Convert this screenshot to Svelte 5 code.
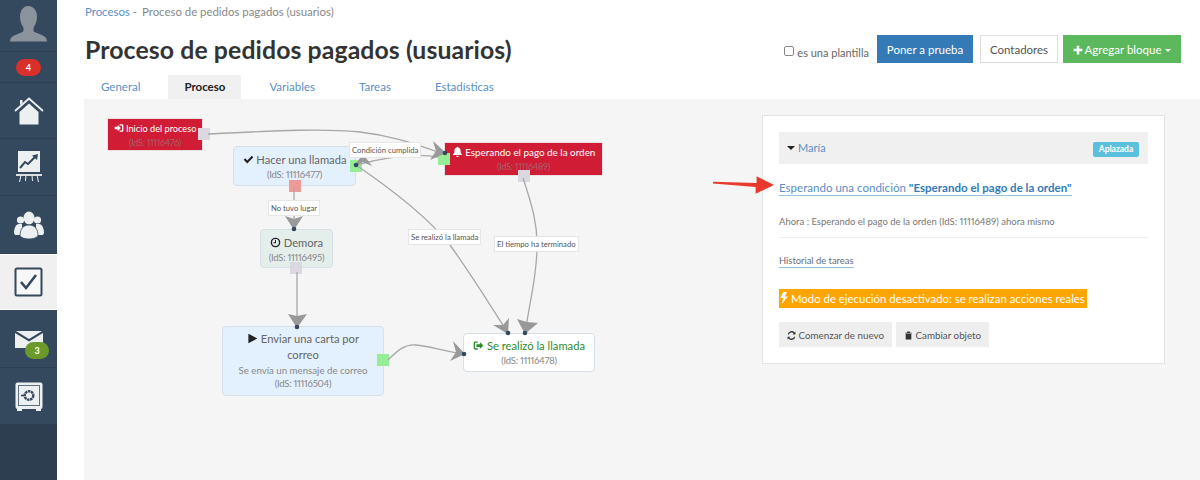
<script>
	const ox = 84
	const oy = 99

	const nodes = [
		{ id: 'start', x: 107, y: 118, w: 96, h: 33, kind: 'red small', icon: 'signin', title: 'Inicio del proceso', ids: '11116476' },
		{ id: 'call', x: 233, y: 146, w: 123, h: 40, kind: 'blue', icon: 'check', title: 'Hacer una llamada', ids: '11116477' },
		{ id: 'delay', x: 260, y: 229, w: 73, h: 39, kind: 'teal', icon: 'clock', title: 'Demora', ids: '11116495' },
		{ id: 'mail', x: 222, y: 326, w: 162, h: 70, kind: 'blue wide', icon: 'play', title: 'Enviar una carta por correo', sub: 'Se envía un mensaje de correo', ids: '11116504' },
		{ id: 'wait', x: 444, y: 142, w: 159, h: 34, kind: 'red', icon: 'bell', title: 'Esperando el pago de la orden', ids: '11116489' },
		{ id: 'done', x: 463, y: 333, w: 132, h: 39, kind: 'white', icon: 'signout', title: 'Se realizó la llamada', ids: '11116478' }
	]

	const ports = [
		{ x: 198, y: 128, c: 'grey' },
		{ x: 350, y: 160, c: 'green' },
		{ x: 289, y: 180, c: 'pink' },
		{ x: 290, y: 262, c: 'grey' },
		{ x: 377, y: 354, c: 'green' },
		{ x: 438, y: 153, c: 'green' },
		{ x: 518, y: 170, c: 'grey' }
	]

	const labels = [
		{ x: 349, y: 142, text: 'Condición cumplida' },
		{ x: 268, y: 200, text: 'No tuvo lugar' },
		{ x: 408, y: 229, text: 'Se realizó la llamada' },
		{ x: 494, y: 236, text: 'El tiempo ha terminado' }
	]

	const edges = [
		'M208,134 C270,131 320,128 360,132 C395,136 420,146 438,152',
		'M356,165 C375,160 410,152 438,157',
		'M294,188 L294,224',
		'M297,272 L297,322',
		'M356,165 C400,195 430,220 450,245 C475,280 490,305 506,330',
		'M523,178 C532,205 538,225 537,250 C536,280 530,300 526,328',
		'M388,360 C398,350 405,344 416,345 C428,346 440,350 458,353'
	]

	const arrows = [
		'446,153 433,141 436,151 430,160',
		'354,166 363,154 372,166 363,162',
		'294,230 285,216 294,219 303,216',
		'297,328 288,314 297,316 307,314',
		'508,334 493,325 503,325 509,318',
		'525,334 517,319 527,322 538,323',
		'465,354 453,341 456,352 450,361'
	]

	const dots = [[445, 153], [356, 165], [294, 229], [297, 327], [508, 333], [525, 333], [464, 354]]

	const nav = [
		{ id: 'home', h: 56 },
		{ id: 'chart', h: 57 },
		{ id: 'people', h: 58 },
		{ id: 'tasks', h: 56, active: true },
		{ id: 'mail', h: 58, badge: 3 },
		{ id: 'safe', h: 57 }
	]

	const tabs = ['General', 'Proceso', 'Variables', 'Tareas', 'Estadísticas']
</script>

{#snippet icon(name)}
	<svg class="ico" viewBox="0 0 16 16" aria-hidden="true">
		{#if name === 'signin'}
			<path d="M1 6h5V3l5 5-5 5v-3H1z" /><path d="M9 2h4a2 2 0 0 1 2 2v8a2 2 0 0 1-2 2H9v-2h4V4H9z" />
		{:else if name === 'signout'}
			<path d="M7 2H3a2 2 0 0 0-2 2v8a2 2 0 0 0 2 2h4v-2H3V4h4z" /><path d="M5 6h5V3l5 5-5 5v-3H5z" />
		{:else if name === 'check'}
			<path d="M1 8.500 3.200 6.300 6.200 9.300 12.800 2.700 15 4.900 6.200 13.700z" />
		{:else if name === 'clock'}
			<path fill-rule="evenodd" d="M8 1a7 7 0 1 1 0 14A7 7 0 0 1 8 1zm0 2a5 5 0 1 0 0 10A5 5 0 0 0 8 3z" /><path d="M7.300 4.500h1.400V9H5V7.600h2.300z" />
		{:else if name === 'play'}
			<path d="M2 1 15 8 2 15z" />
		{:else if name === 'bell'}
			<path d="M8 1a1.200 1.200 0 0 1 1.200 1.300C11.500 2.900 12.500 5 12.500 7.500c0 2.500 1 3.700 2.200 4.700v.8H1.300v-.8c1.200-1 2.200-2.200 2.200-4.700S4.500 2.900 6.800 2.300A1.200 1.200 0 0 1 8 1z" /><path d="M6 14h4a2 2 0 0 1-4 0z" />
		{:else if name === 'refresh'}
			<path d="M13.500 2.500 15 1v5h-5l1.800-1.800A4.800 4.800 0 0 0 3.500 6H1.300a7 7 0 0 1 12.200-3.500z" /><path d="M2.500 13.500 1 15v-5h5l-1.800 1.800A4.800 4.800 0 0 0 12.500 10h2.200a7 7 0 0 1-12.200 3.500z" />
		{:else if name === 'trash'}
			<path d="M6 1h4l1 2h3v1.500H2V3h3zM3 5.500h10V15H3z" />
		{:else if name === 'bolt'}
			<path d="M7 0h5L9 6h4L5 16l2-8H3z" />
		{:else if name === 'plus'}
			<path d="M6 1h4v5h5v4h-5v5H6v-5H1V6h5z" />
		{/if}
	</svg>
{/snippet}

<div class="page">
	<aside class="sidebar">
		<div class="avatar">
			<svg viewBox="0 0 57 52" width="57" height="52">
				<path fill="#8b939c" d="M28 6c6 0 9 5 9 11 0 4-1.500 8-3.500 10.500v3.500c2 2.500 12 4 13 8 .5 1.500 .5 2.500 .5 2.500H10s0-1 .5-2.500c1-4 11-5.500 13-8v-3.500C21.500 25 20 21 20 17c0-6 3-11 8-11z" />
			</svg>
		</div>
		<div class="notify"><span class="pill red">4</span></div>
		{#each nav as item}
			<div class="nav-item" class:active={item.active} style:height="{item.h}px">
				{#if item.id === 'home'}
					<svg viewBox="0 0 30 28" width="30" height="28">
						<path d="M1 14 15 1.500 29 14" fill="none" stroke="#ecf0f1" stroke-width="1.800" />
						<path d="M6 8V3h2.500v3z" fill="#ecf0f1" />
						<path d="M5.500 15 15 6.500 24.500 15v12.500h-19z" fill="#ecf0f1" />
					</svg>
				{:else if item.id === 'chart'}
					<svg viewBox="0 0 26 32" width="26" height="32">
						<rect x="2" y="0" width="22" height="21" fill="#ecf0f1" />
						<path d="M4 17l5-6 3 2 7-7" fill="none" stroke="#34495e" stroke-width="2" />
						<path d="M16 4.500 22 3l-1 6z" fill="#34495e" />
						<path d="M0 24h26" stroke="#ecf0f1" stroke-width="1.800" />
						<path d="M5 24l-1.500 7M21 24l1.500 7M10 24l-.5 6M16 24l.5 6" stroke="#ecf0f1" stroke-width="1" />
					</svg>
				{:else if item.id === 'people'}
					<svg viewBox="0 0 30 28" width="30" height="28" fill="#ecf0f1">
						<circle cx="6.500" cy="9" r="3.600" /><circle cx="23.500" cy="9" r="3.600" />
						<path d="M0 22c0-5 2-9 5-9h3v11H1z" /><path d="M30 22c0-5-2-9-5-9h-3v11h7z" />
						<ellipse cx="15" cy="7" rx="5.500" ry="6.500" />
						<path d="M6 25c0-7 3-11 9-11s9 4 9 11c-2 2-5 3-9 3s-7-1-9-3z" stroke="#34495e" stroke-width=".8" />
					</svg>
				{:else if item.id === 'tasks'}
					<svg viewBox="0 0 29 30" width="29" height="30">
						<rect x="1.500" y="1.500" width="26" height="27" rx="1.500" fill="#f7f7f7" stroke="#34495e" stroke-width="2" />
						<path d="M7 15l5 6 10-13" fill="none" stroke="#34495e" stroke-width="2.600" />
					</svg>
				{:else if item.id === 'mail'}
					<svg class="envelope" viewBox="0 0 28 17" width="28" height="17" fill="#ecf0f1">
						<path d="M1 0h26L14 8z" /><path d="M0 2v15h28V2L14 10.500z" />
					</svg>
				{:else if item.id === 'safe'}
					<svg viewBox="0 0 28 29" width="28" height="29">
						<rect x="0.500" y="0.500" width="27" height="26.500" rx="2" fill="#ecf0f1" />
						<rect x="3.500" y="3.500" width="21" height="20" fill="#ecf0f1" stroke="#5c6f82" stroke-width="1" />
						<circle cx="14" cy="13.500" r="4.300" fill="none" stroke="#34495e" stroke-width="2.400" stroke-dasharray="2.500 .6" />
						<path d="M6 13.500h3" stroke="#34495e" stroke-width="1.600" />
						<path d="M2 27h5v2H2zM21 27h5v2h-5z" fill="#ecf0f1" />
					</svg>
				{/if}
				{#if item.badge}<span class="pill green">{item.badge}</span>{/if}
			</div>
		{/each}
		<div class="sidebar-rest"></div>
	</aside>

	<main class="main">
		<nav class="crumbs"><a href="#top">Procesos</a><span class="sep">-</span><span>Proceso de pedidos pagados (usuarios)</span></nav>

		<header class="head">
			<h1>Proceso de pedidos pagados (usuarios)</h1>
			<div class="actions">
				<label class="tpl"><span class="box"></span>es una plantilla</label>
				<button class="btn primary">Poner a prueba</button>
				<button class="btn plain">Contadores</button>
				<button class="btn success">{@render icon('plus')}Agregar bloque <i class="caret"></i></button>
			</div>
		</header>

		<ul class="tabs">
			{#each tabs as tab}
				<li class:on={tab === 'Proceso'}>{tab}</li>
			{/each}
		</ul>

		<section class="canvas">
			{#each nodes as n}
				<div class="node {n.kind}" style:left="{n.x - ox}px" style:top="{n.y - oy}px" style:width="{n.w}px" style:height="{n.h}px">
					<div class="node-title">{@render icon(n.icon)} {n.title}</div>
					{#if n.sub}<div class="node-sub">{n.sub}</div>{/if}
					<div class="node-ids">(IdS: {n.ids})</div>
				</div>
			{/each}

			{#each ports as p}
				<span class="port {p.c}" style:left="{p.x - ox}px" style:top="{p.y - oy}px"></span>
			{/each}

			<svg class="wires" viewBox="84 99 1116 381" width="1116" height="381">
				{#each edges as d}
					<path {d} fill="none" stroke="#a8a8a8" stroke-width="1.300" />
				{/each}
				{#each arrows as points}
					<polygon {points} fill="#999" />
				{/each}
				{#each dots as [cx, cy]}
					<circle {cx} {cy} r="2.300" fill="#34495e" />
				{/each}
			</svg>

			{#each labels as l}
				<span class="edge-label" style:left="{l.x - ox}px" style:top="{l.y - oy}px">{l.text}</span>
			{/each}

			<div class="panel">
				<div class="subject">
					<span class="who"><i class="caret dark"></i><a href="#top">María</a></span>
					<span class="status">Aplazada</span>
				</div>
				<a class="wait-link" href="#top">Esperando una condición <b>"Esperando el pago de la orden"</b></a>
				<p class="now">Ahora : Esperando el pago de la orden (IdS: 11116489) ahora mismo</p>
				<a class="history" href="#top">Historial de tareas</a>
				<div class="mode-row"><span class="mode">{@render icon('bolt')} Modo de ejecución desactivado: se realizan acciones reales</span></div>
				<div class="panel-actions">
					<button class="btn-soft">{@render icon('refresh')} Comenzar de nuevo</button>
					<button class="btn-soft">{@render icon('trash')} Cambiar objeto</button>
				</div>
			</div>

			<svg class="callout" viewBox="0 0 64 20" width="62" height="20">
				<path d="M0 5.500 45 7V0l18 9-19 9v-7L0 7.500z" fill="#e8392c" />
			</svg>
		</section>
	</main>
</div>

<style>
	:global(body) {
		margin: 0;
		overflow: hidden;
		background: #fff;
	}

	.page {
		display: flex;
		width: 1200px;
		height: 480px;
		overflow: hidden;
		font-family: Lato, "Noto Sans", sans-serif;
		font-variant-numeric: proportional-nums;
		color: #555;
	}

	a {
		color: #5b8fc7;
		text-decoration: none;
	}

	.sidebar {
		width: 57px;
		flex: none;
		display: flex;
		flex-direction: column;
		background: #34495e;
	}

	.avatar {
		height: 52px;
		border-bottom: 1px solid #2d4054;
		box-sizing: border-box;
	}

	.avatar svg {
		display: block;
	}

	.notify {
		height: 31px;
		display: flex;
		align-items: center;
		justify-content: center;
		border-bottom: 1px solid #2d4054;
		box-sizing: border-box;
	}

	.pill {
		display: flex;
		align-items: center;
		justify-content: center;
		width: 25px;
		height: 17px;
		border-radius: 9px;
		color: #fff;
		font-size: 9px;
		font-weight: 700;
	}

	.pill.red {
		background: #d9302b;
	}

	.pill.green {
		position: absolute;
		left: 25px;
		top: 32px;
		width: 24px;
		background: #6b9a2a;
	}

	.nav-item {
		position: relative;
		display: flex;
		align-items: center;
		justify-content: center;
		border-bottom: 1px solid #2d4054;
		box-sizing: border-box;
	}

	.nav-item.active {
		background: #f0f0f0;
		border-top: 1px solid #fff;
		border-bottom: 1px solid #fff;
	}

	.envelope {
		margin-top: 2px;
	}

	.sidebar-rest {
		flex: 1;
		background: #2c3e50;
	}

	.main {
		flex: 1;
		min-width: 0;
		display: flex;
		flex-direction: column;
	}

	.crumbs {
		height: 23px;
		padding-left: 28px;
		font-size: 11.400px;
		line-height: 23px;
		color: #888;
		white-space: nowrap;
	}

	.sep {
		margin: 0 5px 0 3px;
	}

	.head {
		height: 52px;
		display: flex;
		align-items: center;
		justify-content: space-between;
		padding: 0 19px 0 28px;
	}

	h1 {
		margin: 0;
		font-size: 24.800px;
		letter-spacing: 0.1px;
		font-weight: 700;
		color: #333;
		white-space: nowrap;
	}

	.actions {
		display: flex;
		align-items: center;
	}

	.tpl {
		display: flex;
		align-items: center;
		gap: 3px;
		margin-right: 8px;
		padding-top: 6px;
		font-size: 11px;
		color: #666;
	}

	.box {
		width: 8px;
		height: 8px;
		margin-top: -3px;
		border: 1px solid #888;
		border-radius: 2px;
		background: #fff;
	}

	.btn {
		height: 28px;
		padding: 0;
		border: 1px solid transparent;
		box-sizing: border-box;
		font: 11.500px Lato, "Noto Sans", sans-serif;
		white-space: nowrap;
	}

	.primary {
		width: 96px;
		margin-right: 7px;
		background: #337ab7;
		color: #fff;
	}

	.plain {
		width: 78px;
		margin-right: 5px;
		background: #fff;
		border-color: #ddd;
		color: #555;
	}

	.success {
		width: 118px;
		background: #5cb85c;
		color: #fff;
	}

	.success .ico {
		width: 10px;
		height: 10px;
		margin-right: 2px;
	}

	.caret {
		display: inline-block;
		width: 0;
		height: 0;
		margin-left: 1px;
		vertical-align: 2px;
		border: 3.500px solid transparent;
		border-top-color: #fff;
		border-bottom: 0;
	}

	.caret.dark {
		border-top-color: #222;
		border-width: 4px;
		border-bottom: 0;
		margin: 0 3px 0 0;
	}

	.ico {
		width: 1em;
		height: 1em;
		vertical-align: -0.12em;
		fill: currentColor;
	}

	.tabs {
		display: flex;
		height: 24px;
		margin: 0 0 0 28px;
		padding: 0;
		list-style: none;
		font-size: 11.500px;
		line-height: 24px;
		color: #5b8fc7;
	}

	.tabs li {
		padding: 0 16px;
		margin-right: 12px;
	}

	.tabs li.on {
		background: #f0f0f0;
		color: #222;
		font-weight: 700;
	}

	.canvas {
		position: relative;
		flex: 1;
		margin-left: 27px;
		padding: 16px 35px 0 0;
		display: flex;
		justify-content: flex-end;
		align-items: flex-start;
		background: #f5f5f5;
	}

	.wires {
		position: absolute;
		left: 0;
		top: 0;
	}

	.node {
		position: absolute;
		box-sizing: border-box;
		padding-top: 5px;
		border: 1px solid #d8dfe6;
		border-radius: 4px;
		text-align: center;
		color: #666;
	}

	.node-title {
		font-size: 11.200px;
		line-height: 16px;
	}

	.node-title .ico {
		width: 11px;
		height: 11px;
		color: #222;
	}

	.node-sub {
		font-size: 9.700px;
		line-height: 14px;
		color: #888;
		white-space: nowrap;
	}

	.node-ids {
		font-size: 9.500px;
		letter-spacing: -0.25px;
		line-height: 14px;
		color: #888;
	}

	.node.blue {
		background: #e3f0fd;
	}

	.node.blue.wide {
		padding-top: 4px;
	}

	.node.blue.wide .node-title {
		padding: 0 20px;
	}

	.node.teal {
		background: #e4efec;
	}

	.node.white {
		padding-top: 4px;
		background: #fff;
	}

	.node.white .node-title,
	.node.white .node-title .ico {
		color: #2e8b2e;
	}

	.node.red {
		padding-top: 2px;
		background: #d01c34;
		border-color: #e8dfe2;
		border-radius: 0;
		color: #fff;
	}

	.node.red .node-title {
		font-size: 9.900px;
		line-height: 15px;
		color: #fff;
		white-space: nowrap;
	}

	.node.red .node-title .ico {
		color: #fff;
	}

	.node.red .node-ids {
		color: #a7606c;
		line-height: 13px;
		font-size: 9px;
	}

	.node.red.small .node-title {
		font-size: 9.200px;
	}

	.node.red.small .node-title .ico {
		width: 10px;
		height: 10px;
	}

	.port {
		position: absolute;
		width: 12px;
		height: 12px;
	}

	.port.grey {
		background: #dcd8e2;
	}

	.port.green {
		background: #95ee95;
	}

	.port.pink {
		background: #ee9a9a;
	}

	.edge-label {
		position: absolute;
		padding: 0 2px;
		border: 1px solid #e6e6e6;
		background: #fff;
		font-size: 7.700px;
		line-height: 14px;
		color: #555;
		white-space: nowrap;
	}

	.panel {
		position: relative;
		box-sizing: border-box;
		width: 403px;
		height: 249px;
		padding: 16px;
		background: #fff;
		border: 1px solid #e3e3e3;
	}

	.subject {
		display: flex;
		justify-content: space-between;
		align-items: center;
		height: 32px;
		padding: 0 9px 0 8px;
		background: #f0f0f0;
		font-size: 11px;
	}

	.who {
		margin-top: -2px;
	}

	.status {
		width: 46px;
		height: 15px;
		margin-top: 2px;
		border-radius: 2px;
		background: #5bc0de;
		color: #fff;
		font-size: 8.500px;
		font-weight: 700;
		line-height: 15px;
		text-align: center;
	}

	.wait-link {
		display: inline-block;
		margin-top: 17px;
		font-size: 11.550px;
		line-height: 14px;
		border-bottom: 1px solid #9cc3e4;
		white-space: nowrap;
	}

	.wait-link b {
		color: #337ab7;
	}

	.now {
		margin: 19px 0 0;
		padding-bottom: 8px;
		border-bottom: 1px solid #eee;
		font-size: 9.500px;
		line-height: 14px;
		color: #777;
	}

	.history {
		display: inline-block;
		margin-top: 17px;
		font-size: 9.400px;
		line-height: 12px;
		color: #5f6f80;
		border-bottom: 1px solid #9cc3e4;
	}

	.mode-row {
		margin-top: 21px;
		display: flex;
	}

	.mode {
		height: 19px;
		padding: 0 2px 0 1px;
		background: #ffa500;
		color: #fff;
		font-size: 11.400px;
		line-height: 19px;
		white-space: nowrap;
	}

	.mode .ico {
		width: 12px;
		height: 12px;
		margin: 0 -2px;
	}

	.panel-actions {
		display: flex;
		gap: 4px;
		margin-top: 14px;
	}

	.btn-soft {
		height: 25px;
		padding: 0 8px;
		border: 0;
		background: #eee;
		color: #555;
		font: 9.800px Lato, "Noto Sans", sans-serif;
		white-space: nowrap;
	}

	.btn-soft .ico {
		color: #333;
		width: 9px;
		height: 9px;
	}

	.callout {
		position: absolute;
		left: 629px;
		top: 77px;
	}
</style>
